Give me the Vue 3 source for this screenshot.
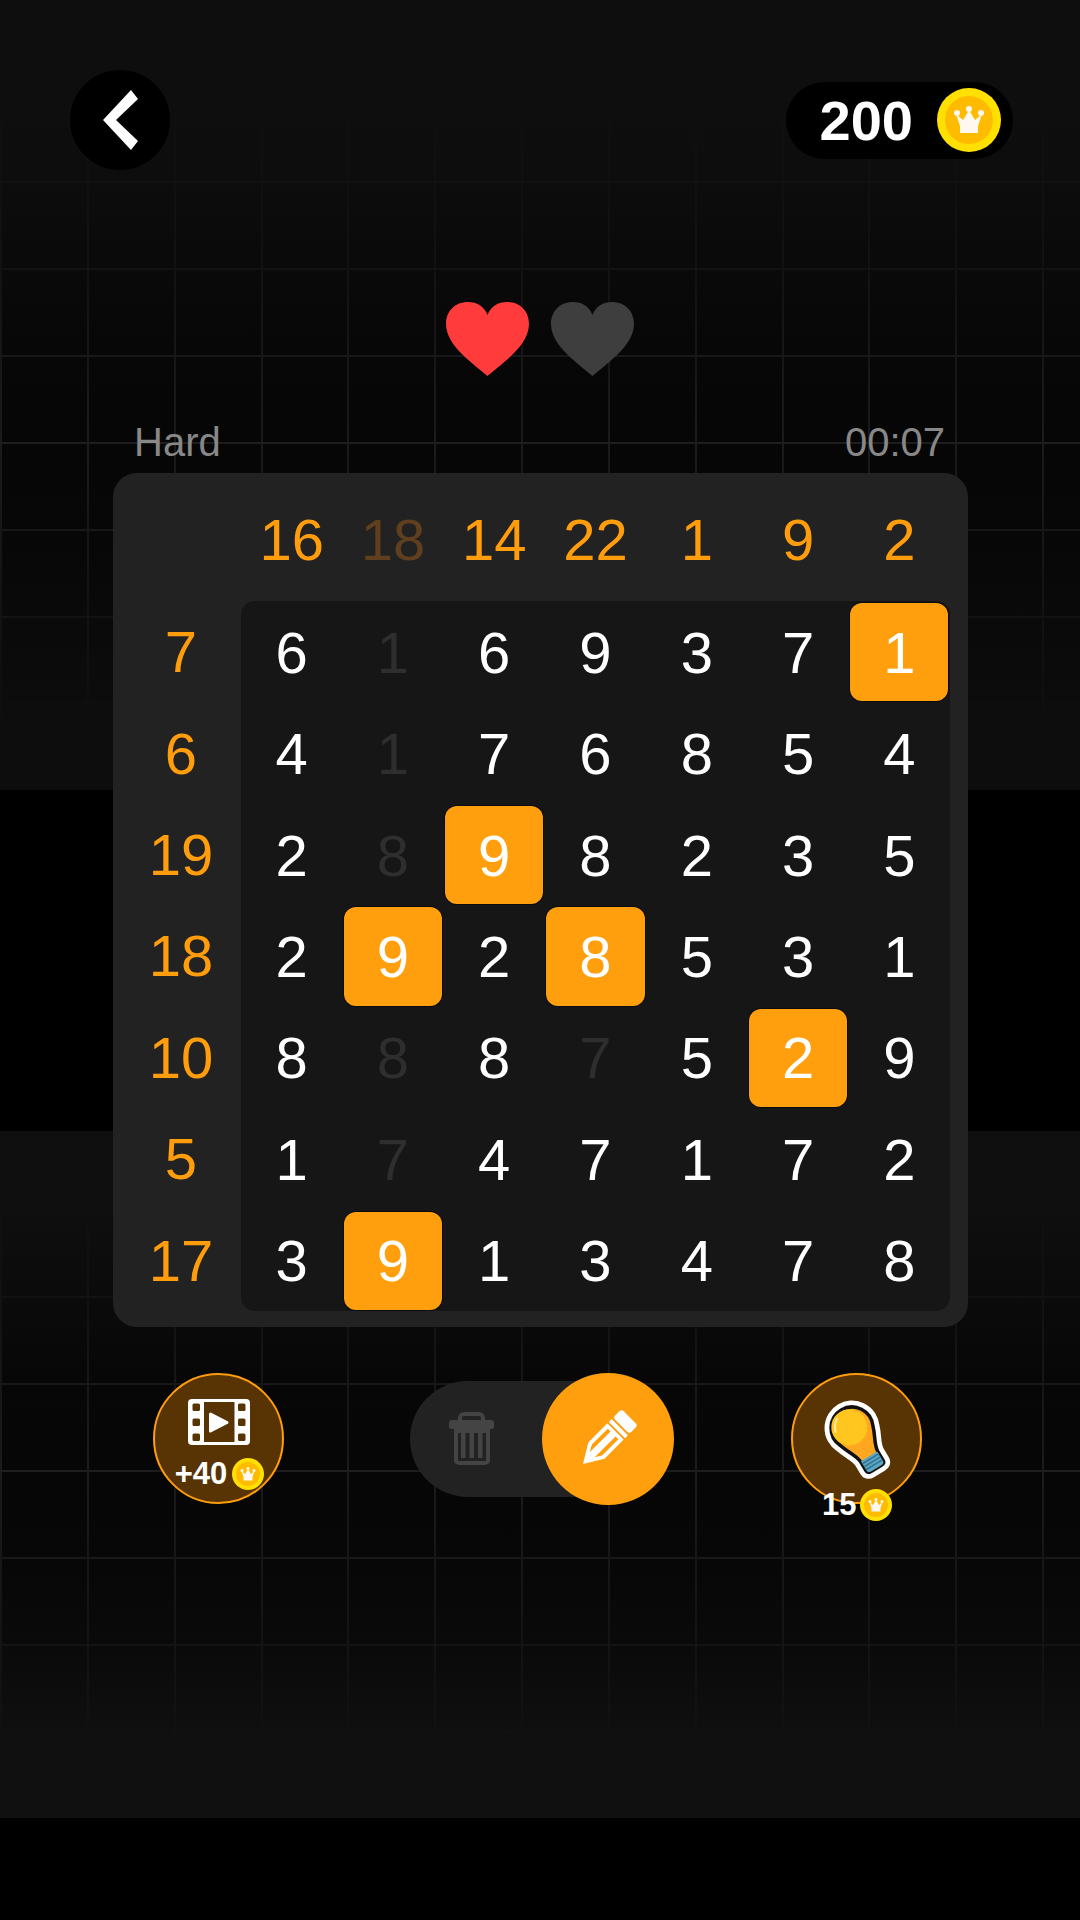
<template>
  <div class="page">
    <svg class="defs">
      <symbol id="coin" viewBox="-32 -32 64 64">
        <circle r="32" fill="#ffe000" />
        <circle r="24" fill="#ffbb00" />
        <circle cx="-12" cy="-7" r="3" fill="#fff8ee" />
        <circle cx="0" cy="-11" r="3" fill="#fff8ee" />
        <circle cx="12" cy="-7" r="3" fill="#fff8ee" />
        <path d="M-9 13L9 13L9 6L13-6L6 0L0-10L-6 0L-13-6L-9 6Z" fill="#fff8ee" />
      </symbol>
    </svg>

    <div class="topbar">
      <button class="back">
        <svg width="100" height="100" viewBox="0 0 100 100">
          <path d="M61 20L68 29L46 50L68 71L61 80L33 50Z" fill="#fff" />
        </svg>
      </button>
      <div class="score">
        <span>200</span>
        <svg width="64" height="64"><use href="#coin" /></svg>
      </div>
    </div>

    <div class="hearts">
      <svg v-for="c in ['#ff3b3b', '#3e3e3e']" :key="c" width="83" height="74" viewBox="0 0 83 74">
        <path d="M41.500 13C38 4 31 0 22 0C9 0 0 9 0 22C0 44 28 62 41.500 74C55 62 83 44 83 22C83 9 74 0 61 0C52 0 45 4 41.500 13Z" :fill="c" />
      </svg>
    </div>

    <div class="meta">
      <span>Hard</span>
      <span>00:07</span>
    </div>

    <div class="board">
      <div class="col-sums">
        <div v-for="(n, i) in colSums" :key="i" :class="['sum', { faded: i === 1 }]">{{ n }}</div>
      </div>
      <div class="row-sums">
        <div v-for="(n, i) in rowSums" :key="i" class="sum">{{ n }}</div>
      </div>
      <div class="cells">
        <template v-for="(row, r) in rows" :key="r">
          <div v-for="(n, c) in row" :key="c" :class="['cell', stateOf(r, c)]">{{ n }}</div>
        </template>
      </div>
    </div>

    <div class="controls">
      <button class="round video">
        <svg width="62" height="46" viewBox="0 0 62 46">
          <path fill="#fff" fill-rule="evenodd" d="M4 0H58A4 4 0 0 1 62 4V42A4 4 0 0 1 58 46H4A4 4 0 0 1 0 42V4A4 4 0 0 1 4 0ZM16 3V43H46.500V3ZM6 4.500A1.500 1.500 0 0 0 4.500 6V10.500A1.500 1.500 0 0 0 6 12H10.500A1.500 1.500 0 0 0 12 10.500V6A1.500 1.500 0 0 0 10.500 4.500ZM6 19.500A1.500 1.500 0 0 0 4.500 21V25.500A1.500 1.500 0 0 0 6 27H10.500A1.500 1.500 0 0 0 12 25.500V21A1.500 1.500 0 0 0 10.500 19.500ZM6 34.500A1.500 1.500 0 0 0 4.500 36V40.500A1.500 1.500 0 0 0 6 42H10.500A1.500 1.500 0 0 0 12 40.500V36A1.500 1.500 0 0 0 10.500 34.500ZM51.500 4.500A1.500 1.500 0 0 0 50 6V10.500A1.500 1.500 0 0 0 51.500 12H56A1.500 1.500 0 0 0 57.500 10.500V6A1.500 1.500 0 0 0 56 4.500ZM51.500 19.500A1.500 1.500 0 0 0 50 21V25.500A1.500 1.500 0 0 0 51.500 27H56A1.500 1.500 0 0 0 57.500 25.500V21A1.500 1.500 0 0 0 56 19.500ZM51.500 34.500A1.500 1.500 0 0 0 50 36V40.500A1.500 1.500 0 0 0 51.500 42H56A1.500 1.500 0 0 0 57.500 40.500V36A1.500 1.500 0 0 0 56 34.500Z" />
          <path d="M22.500 15L39 23.500L22.500 32Z" fill="#fff" stroke="#fff" stroke-width="3" stroke-linejoin="round" />
        </svg>
        <div class="reward">
          <b>+40</b>
          <svg width="32" height="32"><use href="#coin" /></svg>
        </div>
      </button>

      <div class="toggle">
        <div class="track">
          <svg width="45" height="54" viewBox="0 0 45 54" fill="#444">
            <path fill-rule="evenodd" d="M9 8V6A6 6 0 0 1 15 0H30A6 6 0 0 1 36 6V8H42A3 3 0 0 1 45 11V15A2 2 0 0 1 43 17H41V48A5 5 0 0 1 36 53H10A5 5 0 0 1 5 48V17H2A2 2 0 0 1 0 15V11A3 3 0 0 1 3 8ZM13 8H32V6A2 2 0 0 0 30 4H15A2 2 0 0 0 13 6ZM9 21V49H37V21Z" />
            <rect x="12" y="21" width="4.500" height="25" />
            <rect x="20.500" y="21" width="4.500" height="25" />
            <rect x="29" y="21" width="4.500" height="25" />
          </svg>
        </div>
        <button class="knob">
          <svg width="60" height="60" viewBox="0 0 60 60">
            <g transform="translate(5 55) rotate(45)" fill="#fff">
              <rect x="-11.500" y="-66" width="23" height="12" rx="3" />
              <rect x="-11.500" y="-52" width="23" height="4" />
              <path fill-rule="evenodd" d="M-11.500-46H11.500V-19L0 0L-11.500-19ZM-7.500-42.500V-20L-3.500-13V-42.500ZM3.500-42.500V-13L7.500-20V-42.500Z" />
            </g>
          </svg>
        </button>
      </div>

      <button class="round hint">
        <svg width="100" height="100" viewBox="0 0 100 100">
          <g transform="translate(42 38) rotate(-31)">
            <path :d="bulbPath" fill="#fff" stroke="#fff" stroke-width="13" stroke-linejoin="round" />
            <path :d="bulbPath" fill="#ffa81f" stroke="#111" stroke-width="3.500" stroke-linejoin="round" />
            <circle cx="-2" cy="-2" r="18" fill="#ffc61f" />
            <path d="M-16-5A15.500 15.500 0 0 1-8-15.500" fill="none" stroke="#ffe9a0" stroke-width="2" stroke-linecap="round" />
            <path d="M-9.500 33H9.500V44Q9.500 47 6 47H-6Q-9.500 47-9.500 44Z" fill="#5da6c2" />
            <path d="M-9.500 36H9.500M-9.500 39.500H9.500M-9.500 43H9.500" stroke="#2f7493" stroke-width="1.500" />
          </g>
        </svg>
        <div class="cost">
          <b>15</b>
          <svg width="32" height="32"><use href="#coin" /></svg>
        </div>
      </button>
    </div>
  </div>
</template>

<script setup>
const colSums = [16, 18, 14, 22, 1, 9, 2];
const rowSums = [7, 6, 19, 18, 10, 5, 17];

const rows = [
  [6, 1, 6, 9, 3, 7, 1],
  [4, 1, 7, 6, 8, 5, 4],
  [2, 8, 9, 8, 2, 3, 5],
  [2, 9, 2, 8, 5, 3, 1],
  [8, 8, 8, 7, 5, 2, 9],
  [1, 7, 4, 7, 1, 7, 2],
  [3, 9, 1, 3, 4, 7, 8],
];

const picked = ['0-6', '2-2', '3-1', '3-3', '4-5', '6-1'];
const erased = ['0-1', '1-1', '2-1', '4-1', '4-3', '5-1'];

const stateOf = (r, c) => {
  const key = `${r}-${c}`;
  if (picked.includes(key)) return 'picked';
  if (erased.includes(key)) return 'erased';
  return '';
};

const bulbPath =
  'M-19 9A21 21 0 1 1 19 9C16 19 11 24 10 33V44Q10 47 6 47H-6Q-10 47-10 44V33C-11 24-16 19-19 9Z';
</script>

<style>
html,
body {
  background: #000;
}
</style>

<style scoped>
.page {
  width: 1080px;
  height: 1920px;
  overflow: hidden;
  font-family: "Liberation Sans", Arial, sans-serif;
  color: #fff;
  background:
    linear-gradient(#000, #000) 0 790px / 100% 341px no-repeat,
    linear-gradient(#000, #000) 0 1818px / 100% 102px no-repeat,
    linear-gradient(rgb(14 14 14) 95px, rgb(14 14 14 / 0.85) 182px, rgb(12 12 12 / 0.6) 268px, rgb(9 9 9 / 0.25) 356px, rgb(6 6 6 / 0) 442px, rgb(9 9 9 / 0.25) 529px, rgb(12 12 12 / 0.6) 616px, rgb(13 13 13) 730px) 0 0 / 100% 790px no-repeat,
    linear-gradient(rgb(15 15 15) 70px, rgb(13 13 13 / 0.7) 166px, rgb(9 9 9 / 0.25) 253px, rgb(6 6 6 / 0) 340px, rgb(9 9 9 / 0.25) 427px, rgb(13 13 13 / 0.55) 514px, rgb(16 16 16) 614px) 0 1131px / 100% 687px no-repeat,
    repeating-linear-gradient(180deg, transparent 0 7px, #1d1d1d 7px 9px, transparent 9px 87px) 0 0 / 100% 790px no-repeat,
    repeating-linear-gradient(180deg, transparent 0 78px, #1d1d1d 78px 80px, transparent 80px 87px) 0 1131px / 100% 687px no-repeat,
    repeating-linear-gradient(90deg, #1b1b1b 0 2px, transparent 2px 86.85px),
    #060606;
}

.defs {
  display: block;
  width: 0;
  height: 0;
}

button {
  padding: 0;
  border: none;
  color: inherit;
  font: inherit;
}

.topbar {
  display: flex;
  justify-content: space-between;
  align-items: center;
  padding: 70px 67px 0 70px;
}

.back {
  width: 100px;
  height: 100px;
  border-radius: 50%;
  background: #000;
}

.back svg {
  display: block;
}

.score {
  display: flex;
  align-items: center;
  height: 77px;
  padding: 0 12px 0 34px;
  gap: 24px;
  border-radius: 39px;
  background: #000;
  font-size: 56px;
  font-weight: 700;
}

.hearts {
  display: flex;
  justify-content: center;
  gap: 22px;
  margin-top: 132px;
}

.meta {
  display: flex;
  justify-content: space-between;
  height: 46px;
  margin-top: 43px;
  padding: 0 135px 0 134px;
  color: #888;
  font-size: 40px;
  line-height: 46px;
}

.board {
  display: grid;
  grid-template-columns: 128px 709px;
  grid-template-rows: 128px 710px;
  width: 855px;
  height: 854px;
  margin: 8px 0 0 113px;
  border-radius: 24px;
  background: #222;
}

.col-sums {
  grid-column: 2;
  display: grid;
  grid-template-columns: repeat(7, 1fr);
  padding-top: 4px;
}

.row-sums {
  grid-column: 1;
  grid-row: 2;
  display: grid;
  grid-template-rows: repeat(7, 1fr);
  padding-left: 8px;
}

.sum {
  display: flex;
  align-items: center;
  justify-content: center;
  color: #ff9d0d;
  font-size: 58px;
}

.sum.faded {
  color: #5f3f1e;
}

.cells {
  grid-column: 2;
  grid-row: 2;
  display: grid;
  grid-template-columns: repeat(7, 1fr);
  grid-template-rows: repeat(7, 1fr);
  border-radius: 14px;
  background: #161616;
}

.cell {
  display: flex;
  align-items: center;
  justify-content: center;
  margin: 2px 1.500px 1px;
  font-size: 58px;
}

.cell.picked {
  border-radius: 12px;
  background: #ff9f0e;
  box-shadow: 0 0 0 1px #0b0b12;
}

.cell.erased {
  color: #2e2e2e;
}

.controls {
  display: flex;
  align-items: center;
  margin-top: 46px;
  padding-left: 153px;
}

.round {
  position: relative;
  box-sizing: border-box;
  width: 131px;
  height: 131px;
  border: 2.500px solid #ff9d0d;
  border-radius: 50%;
  background: #583405;
}

.video {
  display: flex;
  flex-direction: column;
  align-items: center;
  padding-top: 24px;
}

.reward {
  display: flex;
  align-items: center;
  gap: 5px;
  margin-top: 13px;
  margin-left: 2px;
  font-size: 31px;
  line-height: 32px;
}

.toggle {
  position: relative;
  width: 264px;
  margin-left: 126px;
}

.track {
  display: flex;
  align-items: center;
  width: 230px;
  height: 116px;
  padding-left: 39px;
  box-sizing: border-box;
  border-radius: 58px;
  background: #222;
}

.knob {
  position: absolute;
  right: 0;
  top: -8px;
  display: flex;
  align-items: center;
  justify-content: center;
  width: 132px;
  height: 132px;
  border-radius: 50%;
  background: #ff9f0e;
}

.knob svg {
  overflow: visible;
}

.hint {
  margin-left: 117px;
}

.hint > svg {
  position: absolute;
  left: 16.500px;
  top: 14.500px;
}

.cost {
  position: absolute;
  left: 29px;
  top: 114px;
  display: flex;
  align-items: center;
  gap: 4px;
  font-size: 31px;
  line-height: 32px;
}

.cost svg,
.reward svg {
  flex: none;
}
</style>
